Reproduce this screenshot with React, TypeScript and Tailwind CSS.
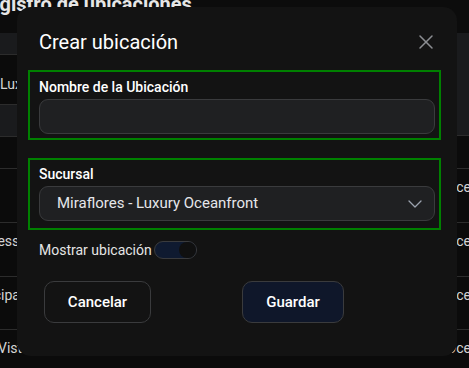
import React from 'react';
import { ChevronDown, X } from 'lucide-react';

const leftRows = [
  { h: 'h-[32px]', text: '', gray: true },
  { h: 'h-[32px]', text: '' },
  { h: 'h-[54px]', text: '' },
  { h: 'h-[54px]', text: 'Express', ml: 'ml-[-30px]' },
  { h: 'h-[53px]', text: 'Principal', ml: 'ml-[-31px]' },
  { h: 'h-[54px]', text: 'Vista', ml: 'ml-[-2px]' },
];

const rightRows = ['h-[54px]', 'h-[54px]', 'h-[53px]', 'h-[54px]'];

const App: React.FC = () => {
  return (
    <div
      className="relative h-[368px] w-[469px] overflow-hidden bg-[#0b0b0b] text-white"
      style={{ fontFamily: 'Roboto, "Noto Sans", sans-serif' }}
    >
      {/* page behind the dialog */}
      <div className="h-[33px] overflow-hidden bg-[#0c0c0c]">
        <h1 className="ml-[-24px] mt-[-10px] whitespace-nowrap text-[20px] font-bold leading-[28px] text-[#e6e6e6]">
          Registro de ubicaciones
        </h1>
      </div>
      <div className="flex">
        <div className="flex-1 overflow-hidden">
          <div className="h-[22px] border-b border-[#2c2c2c] bg-[#1a1b1d]" />
          <div className="flex h-[50px] items-center border-b border-[#2c2c2c] text-[14px] text-[#d4d4d4]">
            <span className="mt-[10px] whitespace-nowrap">Lux</span>
          </div>
          {leftRows.map((r, i) => (
            <div
              key={i}
              className={`${r.h} border-b border-[#2c2c2c] pt-[8px] text-[14px] text-[#d4d4d4] ${r.gray ? 'bg-[#1a1b1d]' : ''}`}
            >
              {r.text && <span className={`block whitespace-nowrap ${r.ml ?? ''}`}>{r.text}</span>}
            </div>
          ))}
        </div>
        <div className="flex-1 overflow-hidden">
          <div className="h-[103px] border-b border-[#2c2c2c] bg-[#1a1b1d]" />
          <div className="h-[33px] border-b border-[#2c2c2c]" />
          {rightRows.map((h, i) => (
            <div key={i} className={`${h} border-b border-[#2c2c2c] pt-[8px] text-[14px] text-[#d4d4d4]`}>
              <span className="ml-[212px] block whitespace-nowrap">Oceanfront</span>
            </div>
          ))}
        </div>
      </div>

      {/* dialog */}
      <div className="absolute left-[17px] top-[7px] h-[349px] w-[440px] rounded-[14px] bg-[#131313] pl-[11px] pr-[16px] pt-[21px]">
        <div className="flex h-[28px] items-center justify-between pl-[11px] pr-[3px]">
          <h2 className="text-[20px] leading-[28px] text-white">Crear ubicación</h2>
          <X size={24} strokeWidth={1.5} className="text-[#8b8d92]" />
        </div>

        <div className="mt-[14px] border-2 border-[#008000] pb-[4px] pl-[9px] pr-[4px] pt-[5px]">
          <label className="block text-[14px] font-medium leading-[20px] text-white">
            Nombre de la Ubicación
          </label>
          <input
            type="text"
            className="mt-[2px] block h-[35px] w-full rounded-[9px] border border-[#3a3b3d] bg-[#1f2022] px-3 text-[15px] text-white outline-none"
          />
        </div>

        <div className="mt-[18px] border-2 border-[#008000] pb-[7px] pl-[9px] pr-[4px] pt-[4px]">
          <label className="block text-[14px] font-medium leading-[20px] text-white">Sucursal</label>
          <div className="mt-[2px] flex h-[35px] items-center justify-between rounded-[9px] border border-[#3a3b3d] bg-[#1f2022] pl-[17px] pr-[7px]">
            <span className="text-[15px] text-[#e5e7eb]">Miraflores - Luxury Oceanfront</span>
            <ChevronDown size={24} strokeWidth={1.3} className="text-[#9ca3af]" />
          </div>
        </div>

        <div className="mt-[10px] flex h-[20px] items-center pl-[11px]">
          <span className="text-[14px] leading-[20px] text-[#e5e5e5]">Mostrar ubicación</span>
          <div className="ml-[2px] flex h-[18px] w-[43px] items-center justify-end rounded-full border border-[#3a3b3d] bg-[#0f1a30]">
            <div className="h-[16px] w-[17px] rounded-full bg-[#101010]" />
          </div>
        </div>

        <div className="mt-[21px] flex pl-[16px]">
          <button className="h-[42px] w-[107px] rounded-[10px] border border-[#3a3b3d] text-[15px] font-medium text-white">
            Cancelar
          </button>
          <button className="ml-[91px] h-[42px] w-[102px] rounded-[10px] border border-[#3a3b3d] bg-[#0f172a] text-[15px] font-medium text-white">
            Guardar
          </button>
        </div>
      </div>
    </div>
  );
};

export default App;
